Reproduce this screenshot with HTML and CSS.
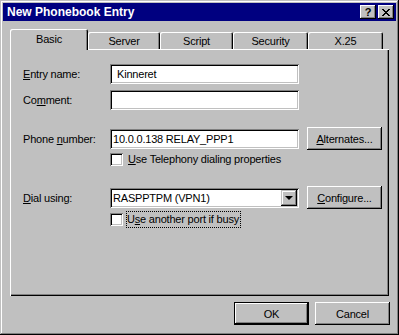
FILE: index.html
```html
<!DOCTYPE html>
<html lang="en">
<head>
    <meta charset="UTF-8">
    <meta name="viewport" content="width=device-width, initial-scale=1.0">
    <title>New Phonebook Entry</title>
    <link rel="stylesheet" href="styles.css">
</head>
<body>

    <div class="window">
        <!-- Title bar -->
        <div class="titlebar">
            <span class="title">New Phonebook Entry</span>
            <div class="cap-btns">
                <span class="cap-btn help">?</span>
                <span class="cap-btn">
                    <svg width="8" height="7" viewBox="0 0 8 7" shape-rendering="crispEdges"><path d="M0 0h2v1H0zM6 0h2v1H6zM1 1h2v1H1zM5 1h2v1H5zM2 2h4v1H2zM3 3h2v1H3zM2 4h4v1H2zM1 5h2v1H1zM5 5h2v1H5zM0 6h2v1H0zM6 6h2v1H6z" fill="#000"/></svg>
                </span>
            </div>
        </div>

        <!-- Tabs -->
        <div class="tabs">
            <div class="tab tab-basic active">Basic</div>
            <div class="tab tab-server">Server</div>
            <div class="tab tab-script">Script</div>
            <div class="tab tab-security">Security</div>
            <div class="tab tab-x25">X.25</div>
        </div>

        <!-- Basic page -->
        <div class="panel">
            <div class="row">
                <label class="label" for="entryName"><u>E</u>ntry name:</label>
                <input class="field indent" type="text" id="entryName" value="Kinneret">
            </div>
            <div class="row gap-small">
                <label class="label" for="comment">Co<u>m</u>ment:</label>
                <input class="field" type="text" id="comment" value="">
            </div>

            <div class="row gap-phone">
                <label class="label" for="phone">Phone <u>n</u>umber:</label>
                <input class="field" type="text" id="phone" value="10.0.0.138 RELAY_PPP1">
                <button class="btn side" type="button"><u>A</u>lternates...</button>
            </div>
            <div class="check-row gap-check">
                <span class="checkbox"></span>
                <span class="check-text"><u>U</u>se Telephony dialing properties</span>
            </div>

            <div class="row gap-dial">
                <span class="label"><u>D</u>ial using:</span>
                <div class="field combo">
                    <span>RASPPTPM (VPN1)</span>
                    <span class="drop-btn"><span class="arrow"></span></span>
                </div>
                <button class="btn side" type="button"><u>C</u>onfigure...</button>
            </div>
            <div class="check-row gap-check2">
                <span class="checkbox"></span>
                <span class="check-text focus">U<u>s</u>e another port if busy</span>
            </div>
        </div>

        <!-- Buttons -->
        <div class="actions">
            <button class="btn default" type="button">OK</button>
            <button class="btn" type="button">Cancel</button>
        </div>
    </div>

</body>
</html>
```

FILE: styles.css
```css
body {
    margin: 0;
    font-family: "Liberation Sans", Arial, sans-serif;
    font-size: 11px;
    letter-spacing: -0.2px;
    color: #000;
    background: #c0c0c0;
}
.window {
    width: 399px;
    height: 335px;
    box-sizing: border-box;
    padding: 3px;
    background: #c0c0c0;
    box-shadow: inset -1px -1px #000, inset 1px 1px #c0c0c0, inset -2px -2px #808080, inset 2px 2px #fff;
    display: flex;
    flex-direction: column;
}
.titlebar {
    height: 18px;
    background: #000080;
    color: #fff;
    display: flex;
    align-items: center;
    justify-content: space-between;
    padding: 0 2px 0 4px;
}
.title {
    font-weight: bold;
    font-size: 12px;
    letter-spacing: 0;
}
.cap-btns {
    display: flex;
    gap: 2px;
}
.cap-btn {
    width: 16px;
    height: 14px;
    box-sizing: border-box;
    background: #c0c0c0;
    box-shadow: inset -1px -1px #000, inset 1px 1px #fff, inset -2px -2px #808080;
    display: flex;
    align-items: center;
    justify-content: center;
    color: #000;
}
.cap-btn.help {
    font-weight: bold;
    font-size: 11px;
    letter-spacing: 0;
    padding-bottom: 1px;
}
.tabs {
    display: flex;
    align-items: flex-end;
    height: 20px;
    margin: 8px 7px 0;
    position: relative;
    z-index: 1;
}
.tab {
    height: 17px;
    box-sizing: border-box;
    display: flex;
    align-items: center;
    justify-content: center;
    background: #c0c0c0;
    border-radius: 2px 2px 0 0;
    box-shadow: inset 1px 1px #fff, inset -1px 0 #000, inset -2px 0 #808080;
    padding-top: 1px;
}
.tab.active {
    height: 21px;
    margin-bottom: -1px;
    padding-bottom: 2px;
}
.tab-basic { width: 78px; }
.tab-server { width: 72px; }
.tab-script { width: 73px; }
.tab-security { width: 75px; }
.tab-x25 { width: 75px; }
.panel {
    height: 247px;
    box-sizing: border-box;
    margin: 0 7px;
    padding: 15px 0 0 13px;
    box-shadow: inset 1px 1px #fff, inset -1px -1px #000, inset -2px -2px #808080;
}
.row {
    display: flex;
    align-items: center;
}
.gap-small { margin-top: 6px; }
.gap-phone { margin-top: 17px; }
.gap-check { margin-top: 3px; }
.gap-dial { margin-top: 20px; }
.gap-check2 { margin-top: 4px; }
.label {
    width: 87px;
    flex-shrink: 0;
}
.field {
    width: 189px;
    height: 20px;
    box-sizing: border-box;
    border: none;
    margin: 0;
    padding: 0 3px;
    background: #fff;
    font: inherit;
    letter-spacing: inherit;
    color: #000;
    box-shadow: inset 1px 1px #808080, inset -1px -1px #fff, inset 2px 2px #000, inset -2px -2px #c0c0c0;
    outline: none;
}
.field.indent {
    padding-left: 7px;
}
.combo {
    display: flex;
    align-items: center;
    justify-content: space-between;
    padding: 2px 2px 2px 3px;
}
.drop-btn {
    width: 16px;
    height: 16px;
    box-sizing: border-box;
    background: #c0c0c0;
    box-shadow: inset -1px -1px #000, inset 1px 1px #c0c0c0, inset -2px -2px #808080, inset 2px 2px #fff;
    display: flex;
    align-items: center;
    justify-content: center;
}
.arrow {
    width: 0;
    height: 0;
    border-left: 4px solid transparent;
    border-right: 4px solid transparent;
    border-top: 4px solid #000;
    margin-top: 1px;
}
.btn {
    width: 75px;
    height: 23px;
    box-sizing: border-box;
    border: none;
    padding: 0;
    background: #c0c0c0;
    font: inherit;
    letter-spacing: inherit;
    color: #000;
    box-shadow: inset -1px -1px #000, inset 1px 1px #fff, inset -2px -2px #808080;
}
.btn.side {
    margin-left: 8px;
}
.btn.default {
    box-shadow: inset 0 0 0 1px #000, inset -2px -2px #000, inset 2px 2px #fff, inset -3px -3px #808080;
}
.check-row {
    display: flex;
    align-items: center;
    margin-left: 87px;
    height: 13px;
}
.checkbox {
    width: 13px;
    height: 13px;
    box-sizing: border-box;
    background: #fff;
    box-shadow: inset 1px 1px #808080, inset -1px -1px #fff, inset 2px 2px #000, inset -2px -2px #c0c0c0;
}
.check-text {
    margin-left: 5px;
    line-height: 13px;
}
.check-text.focus {
    margin-left: 4px;
    padding: 1px 1px 1px 0;
    outline: 1px dotted #000;
}
.actions {
    display: flex;
    justify-content: flex-end;
    gap: 6px;
    margin-top: 6px;
    padding-right: 6px;
}
```
